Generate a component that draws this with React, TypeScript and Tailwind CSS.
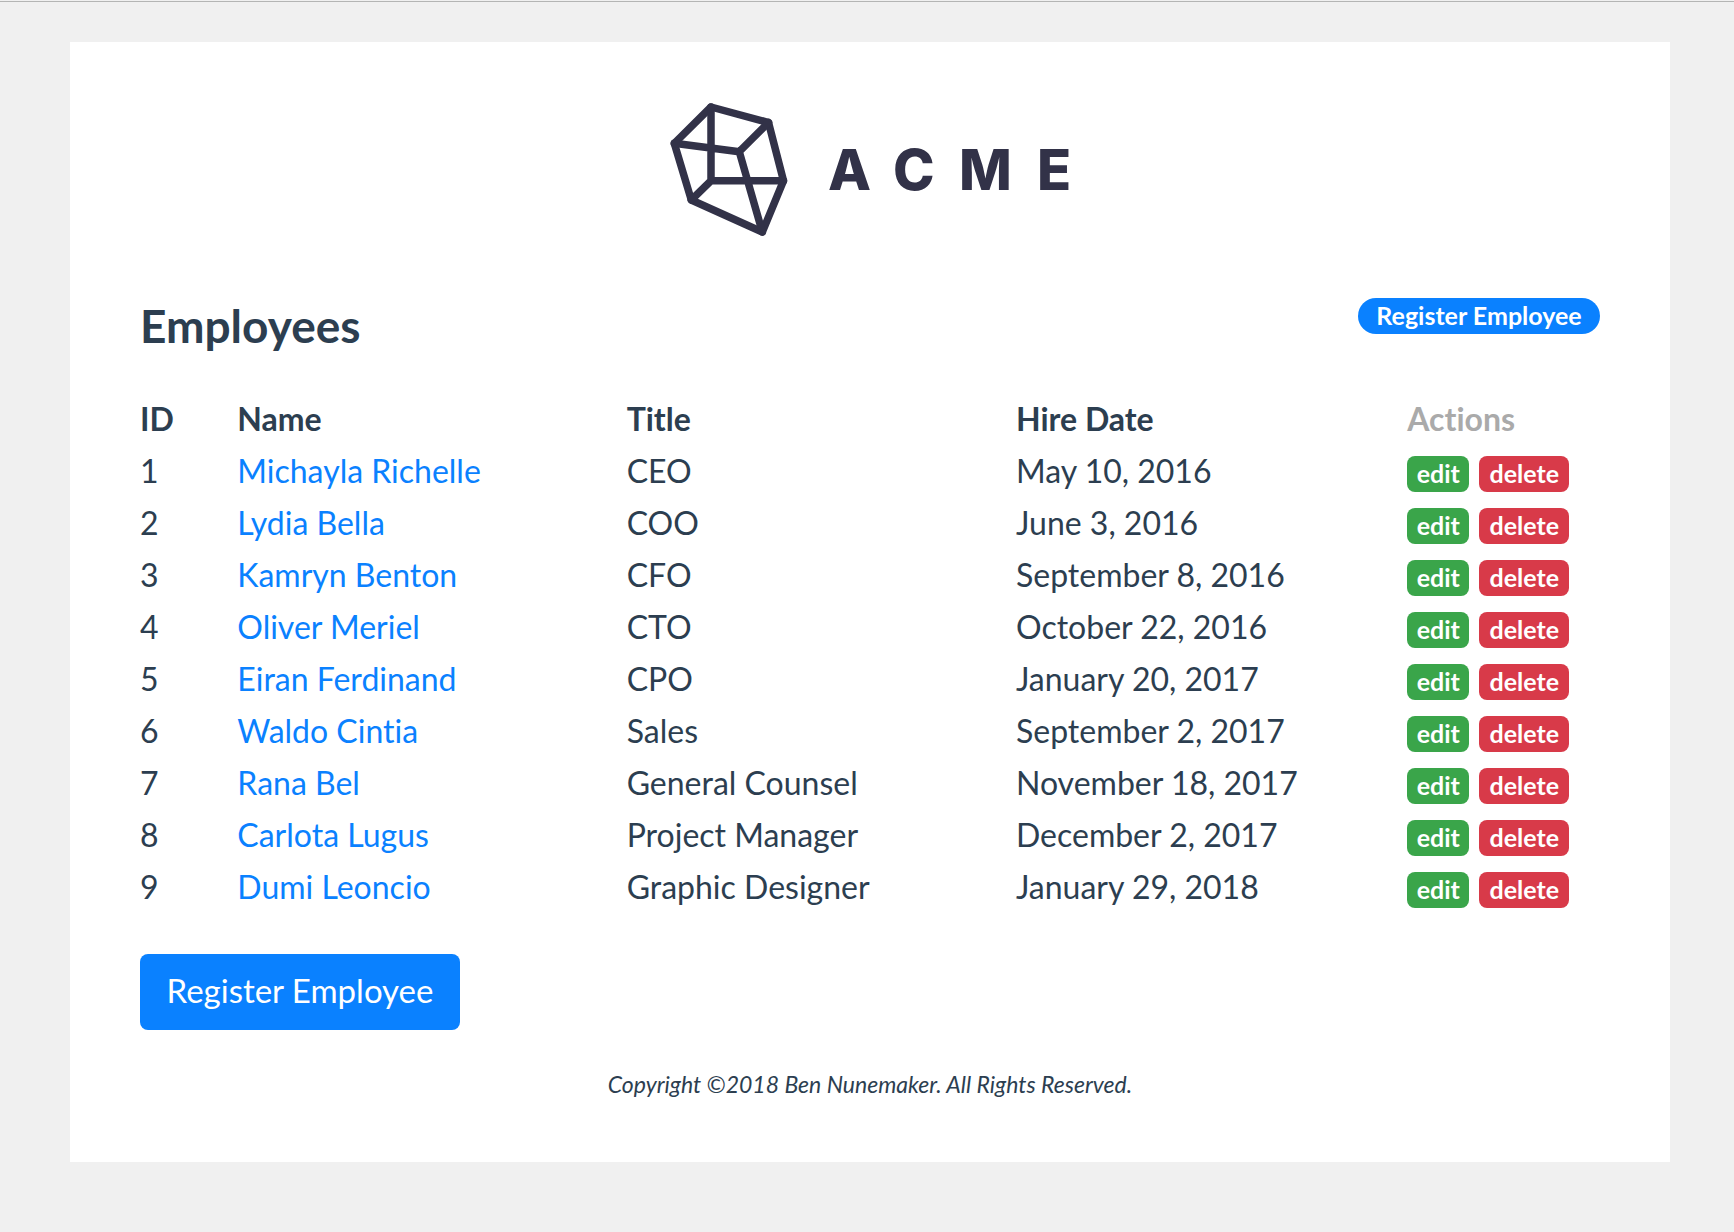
import React from "react";

type Employee = { id: number; name: string; title: string; hired: string };

const employees: Employee[] = [
  { id: 1, name: "Michayla Richelle", title: "CEO", hired: "May 10, 2016" },
  { id: 2, name: "Lydia Bella", title: "COO", hired: "June 3, 2016" },
  { id: 3, name: "Kamryn Benton", title: "CFO", hired: "September 8, 2016" },
  { id: 4, name: "Oliver Meriel", title: "CTO", hired: "October 22, 2016" },
  { id: 5, name: "Eiran Ferdinand", title: "CPO", hired: "January 20, 2017" },
  { id: 6, name: "Waldo Cintia", title: "Sales", hired: "September 2, 2017" },
  { id: 7, name: "Rana Bel", title: "General Counsel", hired: "November 18, 2017" },
  { id: 8, name: "Carlota Lugus", title: "Project Manager", hired: "December 2, 2017" },
  { id: 9, name: "Dumi Leoncio", title: "Graphic Designer", hired: "January 29, 2018" },
];

function Logo() {
  return (
    <svg role="img" aria-label="ACME" width="402" height="134" viewBox="0 0 402 134">
      <g fill="none" stroke="#323248" strokeWidth="7.5" strokeLinejoin="round" strokeLinecap="round">
        <path d="M42 4 99.5 19.5 114.5 77.8 93.3 129 22.3 97 5.3 40.3Z" />
        <path d="M42 4V77.8H114.5M42 77.8 22.3 97M5.3 40.3 70.3 48.7 99.5 19.5M70.3 48.7 93.3 129" />
      </g>
      <text
        x="159 224 290 368"
        y="87"
        fill="#323248"
        className="font-['Inter',sans-serif] text-[56px] font-extrabold"
      >
        ACME
      </text>
    </svg>
  );
}

function Badge({ label, className }: { label: string; className: string }) {
  return (
    <button
      type="button"
      className={`h-9 cursor-pointer pb-0.5 text-center text-[25px] leading-[34px] font-bold text-white ${className}`}
    >
      {label}
    </button>
  );
}

export default function App() {
  return (
    <div className="min-h-screen bg-[#f0f0f0] pt-px font-['Lato',sans-serif] text-[#2c3e50] [font-variant-ligatures:none]">
      <div className="border-t border-[#b4b5b4] pt-10 pr-16 pb-[70px] pl-[70px]">
        <main className="bg-white px-[70px] pt-[61px] pb-16">
          <header className="flex justify-center">
            <Logo />
          </header>

          <div className="mt-[61px] flex items-start justify-between">
            <h1 className="py-0.5 text-[46px] leading-[52px] font-bold">Employees</h1>
            <Badge label="Register Employee" className="min-w-[242px] rounded-full bg-[#0a81ff] px-[15px]" />
          </div>

          <table className="mt-[39px] w-full table-fixed border-collapse text-left text-[32px] leading-[52px]">
            <colgroup>
              <col className="w-1/15" />
              <col className="w-4/15" />
              <col className="w-4/15" />
              <col className="w-4/15" />
              <col className="w-2/15" />
            </colgroup>
            <thead>
              <tr>
                <th className="p-0 font-bold">ID</th>
                <th className="p-0 font-bold">Name</th>
                <th className="p-0 font-bold">Title</th>
                <th className="p-0 font-bold">Hire Date</th>
                <th className="p-0 pl-0.5 font-bold text-[#aaaaaa]">Actions</th>
              </tr>
            </thead>
            <tbody>
              {employees.map((e) => (
                <tr key={e.id}>
                  <td className="p-0">{e.id}</td>
                  <td className="p-0">
                    <a href={`#employee-${e.id}`} className="text-[#0a81ff]">
                      {e.name}
                    </a>
                  </td>
                  <td className="p-0">{e.title}</td>
                  <td className="p-0">{e.hired}</td>
                  <td className="p-0 pl-0.5">
                    <div className="flex gap-[10px] pt-[5px]">
                      <Badge label="edit" className="w-[62px] rounded-lg bg-[#3aa54a]" />
                      <Badge label="delete" className="w-[90px] rounded-lg bg-[#d83a49]" />
                    </div>
                  </td>
                </tr>
              ))}
            </tbody>
          </table>

          <button
            type="button"
            className="mt-[41px] block h-[76px] min-w-[320px] cursor-pointer rounded-lg bg-[#0a81ff] px-6 pb-0.5 text-[33px] text-white"
          >
            Register Employee
          </button>

          <footer className="mt-10 text-center text-[23px] leading-7 italic">
            Copyright ©2018 Ben Nunemaker. All Rights Reserved.
          </footer>
        </main>
      </div>
    </div>
  );
}
